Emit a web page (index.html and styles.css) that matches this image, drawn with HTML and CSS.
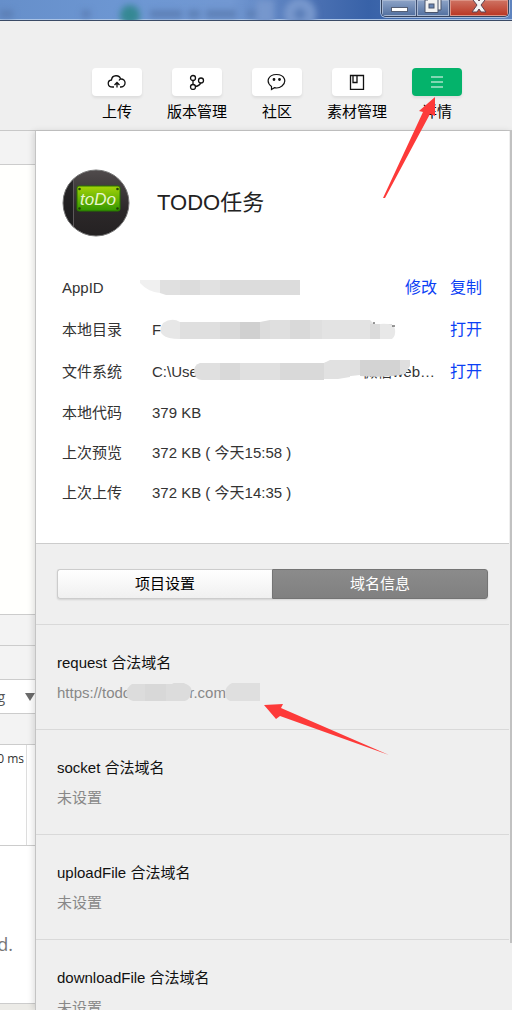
FILE: index.html
```html
<!DOCTYPE HTML>
<html lang="zh-CN">
    <head>
        <title>TODO任务</title>
        <meta charset="UTF-8">
        <link rel="stylesheet" href="styles.css">
    </head>
    <body>
        <header class="titlebar">
            <svg class="glass" width="330" height="20" viewBox="0 0 330 20">
                <g class="blur">
                    <path d="M0 14h13M82 14h8M150 14h32M188 14h12M206 14h30M247 14h10" stroke="#5b7db3" stroke-width="7"/>
                    <circle cx="130" cy="15" r="10" fill="#358893"/>
                    <rect x="256" y="0" width="18" height="24" fill="#7697cd"/>
                    <circle cx="300" cy="14" r="16" fill="#7898cd"/>
                    <path d="M294 14h12M300 8v12" stroke="#5377b3" stroke-width="4"/>
                </g>
            </svg>
            <div class="win_btns">
                <button class="win" aria-label="最小化">
                    <svg width="18" height="16" viewBox="0 0 18 16"><rect x="1.500" y="7.500" width="16" height="4" fill="#fff" stroke="#555f75"/></svg>
                </button>
                <button class="win" aria-label="还原">
                    <svg width="18" height="16" viewBox="0 0 18 16"><path d="M4-2h13v12h-3v2.500H1V0h3z" fill="#f2f2f2" stroke="#4a546c"/><path d="M14 0v10" stroke="#4a546c"/><rect x="5" y="4" width="5" height="4" fill="#6b87b5" stroke="#4a546c"/></svg>
                </button>
                <button class="win close" aria-label="关闭">
                    <svg width="18" height="16" viewBox="0 0 18 16"><path d="M3-2h4l2 3 2-3h4v2l-4 5 5 7h-5l-2-3-2 3H2l5-7-4-5z" fill="#f4f4f4" stroke="#5e4350"/></svg>
                </button>
            </div>
        </header>

        <nav class="toolbar">
            <button class="tool">
                <span class="box">
                    <svg width="20" height="16" viewBox="0 0 20 16" fill="none" stroke="#111" stroke-width="1.300"><path d="M7 13H5.500C0 13 0 6.500 4.500 6 5 .5 12.500.5 13.500 5c6-.5 6 8 .5 8h-1M12 6.500q.5-1 1.500-1.500M10 13.500V9M7.500 11 10 8.500l2.500 2.500"/></svg>
                </span>
                <span class="name">上传</span>
            </button>
            <button class="tool">
                <span class="box">
                    <svg width="16" height="16" viewBox="0 0 16 16" fill="none" stroke="#111" stroke-width="1.300"><circle cx="4" cy="4" r="2.500"/><circle cx="4" cy="13" r="2.500"/><circle cx="12" cy="6.500" r="2.500"/><path d="M4 6.500v4M6.500 12.500C9 12 11 11 11.500 9"/></svg>
                </span>
                <span class="name">版本管理</span>
            </button>
            <button class="tool">
                <span class="box">
                    <svg width="20" height="18" viewBox="0 0 20 18" fill="none" stroke="#111" stroke-width="1.200"><path d="M4.500 16.500V13.500C-1.500 9 1 1.500 9.500 1.500S20 9 15 13c-2.500 2-5.500 2.200-7.500 1.700z"/><circle cx="7" cy="6.500" r=".8" fill="#111"/><circle cx="12.500" cy="6.500" r=".8" fill="#111"/></svg>
                </span>
                <span class="name">社区</span>
            </button>
            <button class="tool">
                <span class="box">
                    <svg width="16" height="16" viewBox="0 0 16 16" fill="none" stroke="#111" stroke-width="1.300"><path d="M1.500 1.500h13v14h-13zM4 1.500v7h4v-7"/></svg>
                </span>
                <span class="name">素材管理</span>
            </button>
            <button class="tool active">
                <span class="box">
                    <svg width="12" height="12" viewBox="0 0 12 12" stroke="#a9e4ca" stroke-width="1.500"><path d="M0 1h12M0 6h12M0 11h12"/></svg>
                </span>
                <span class="name">详情</span>
            </button>
        </nav>

        <main class="work">
            <aside class="devtools">
                <div class="strip top"></div>
                <div class="canvas"></div>
                <div class="strip bar1"></div>
                <div class="strip bar2"></div>
                <div class="filter"><span>g</span><svg width="10" height="8" viewBox="0 0 10 8"><path d="M0 0h10L5 8z" fill="#6b6b6b"/></svg></div>
                <div class="strip bar3"></div>
                <div class="timeline"><span>0 ms</span></div>
                <div class="message"><span>d.</span></div>
                <div class="strip foot"></div>
            </aside>

            <section class="panel">
                <div class="info">
                    <div class="project">
                        <svg width="68" height="68" viewBox="0 0 68 68">
                            <defs>
                                <linearGradient id="cover" x2="0" y2="1"><stop stop-color="#514c4d"/><stop offset=".6" stop-color="#2c2829"/><stop offset="1" stop-color="#242122"/></linearGradient>
                                <linearGradient id="plate" x2="0" y2="1"><stop stop-color="#a4d408"/><stop offset="1" stop-color="#329600"/></linearGradient>
                                <clipPath id="round"><circle cx="34" cy="34" r="33"/></clipPath>
                            </defs>
                            <g clip-path="url(#round)">
                                <rect width="68" height="68" fill="url(#cover)"/>
                                <rect width="11" height="68" fill="#1b1b1c" opacity=".7"/>
                                <path d="M11.500 0v68" stroke="#5c585a"/>
                            </g>
                            <circle cx="34" cy="34" r="33" fill="none" stroke="#777"/>
                            <rect x="15" y="17" width="43" height="25" rx="2" fill="url(#plate)" stroke="#267200"/>
                            <g fill="#24420b"><circle cx="17.500" cy="20" r="1.300"/><circle cx="55.500" cy="20" r="1.300"/><circle cx="17.500" cy="39.500" r="1.300"/><circle cx="55.500" cy="39.500" r="1.300"/></g>
                            <text class="logo_text" x="36" y="36" text-anchor="middle">toDo</text>
                        </svg>
                        <h1>TODO任务</h1>
                    </div>
                    <dl class="fields">
                        <div class="row">
                            <dt>AppID</dt>
                            <dd>
                                <svg class="mosaic" width="290" height="24" viewBox="-12 0 290 24"><path d="M-12 4H8v13Q-4 16-12 7z" fill="#f0f0f0"/><path d="M8 4h20v15H14l-6-2z" fill="#e0e0e0"/><path d="M28 4h20v15H28zM68 4h80v15H68z" fill="#dcdcdc"/><path d="M48 4h20v15H48z" fill="#e1e1e1"/></svg>
                            </dd>
                            <dd class="act"><a href="#">修改</a><a href="#">复制</a></dd>
                        </div>
                        <div class="row">
                            <dt>本地目录</dt>
                            <dd>
                                <span>F</span>
                                <svg class="mosaic" width="290" height="24" viewBox="-12 0 290 24"><path d="M28 4q-8-5-17 1-5 8 0 12 4 4 17 4z" fill="#e7e7e7"/><path d="M28 4h40v17H28zM118 2h52v19h-52z" fill="#dfdfdf"/><path d="M68 4h20v17H68zM138 2h20v19h-20z" fill="#d9d9d9"/><path d="M88 4h20v17H88z" fill="#d0d0d0"/><path d="M108 4l10-2v19h-10z" fill="#dcdcdc"/><path d="M170 21h52V6l-4-4h-48z" fill="#e3e3e3"/><path d="M218 6h22v15h-22z" fill="#dbdbdb"/><path d="M228 6q14-1 15 5 1 7-3 10h-12z" fill="#e8e8e8"/><path d="M221 5h2M240 8h3" stroke="#333"/></svg>
                            </dd>
                            <dd class="act"><a href="#">打开</a></dd>
                        </div>
                        <div class="row">
                            <dt>文件系统</dt>
                            <dd>
                                <span>C:\Use</span><span>微信web…</span>
                                <svg class="mosaic" width="290" height="24" viewBox="-12 0 290 24"><path d="M58 3H48q-6 2-6 8 1 9 8 9h8z" fill="#dfdfdf"/><path d="M58 3h80v17H58zM172 3l10-3h26v15l-36 4z" fill="#e0e0e0"/><path d="M68 3h20v17H68zM128 3h44v17h-44z" fill="#d9d9d9"/><path d="M172 3l6-3h20v17l-12 2h-14z" fill="#e1e1e1"/><path d="M208 0h49q2 3 0 6l-4 8q-18 4-45 2z" fill="#d3d3d3"/><path d="M248 0h10v6l-5 8h-5z" fill="#dfdfdf"/></svg>
                            </dd>
                            <dd class="act"><a href="#">打开</a></dd>
                        </div>
                        <div class="row short"><dt>本地代码</dt><dd>379 KB</dd></div>
                        <div class="row short"><dt>上次预览</dt><dd>372 KB ( 今天15:58 )</dd></div>
                        <div class="row short"><dt>上次上传</dt><dd>372 KB ( 今天14:35 )</dd></div>
                    </dl>
                </div>

                <div class="tabs">
                    <button class="tab">项目设置</button>
                    <button class="tab on">域名信息</button>
                </div>

                <div class="domain">
                    <h2>request 合法域名</h2>
                    <p class="url">
                        <span>https://todo</span><span class="tail">r.com.</span>
                        <svg class="mosaic" width="210" height="24" viewBox="0 0 210 24"><path d="M75 1h40q6-4 14 0 7 3 5 8-1 8-6 9H76q-7-2-7-8 1-6 6-9z" fill="#dcdcdc"/><path d="M88 1h21v17H88z" fill="#d8d8d8"/><path d="M175 0h28v18h-30q-5-2-5-9 1-6 7-9z" fill="#dfdfdf"/></svg>
                    </p>
                </div>
                <div class="domain"><h2>socket 合法域名</h2><p>未设置</p></div>
                <div class="domain"><h2>uploadFile 合法域名</h2><p>未设置</p></div>
                <div class="domain"><h2>downloadFile 合法域名</h2><p>未设置</p></div>
                <div class="thumb"></div>
            </section>
        </main>

        <svg class="arrow to_detail" width="54" height="102" viewBox="0 0 54 102"><path d="M52 0 36 14l4 1L0 101h2L47 17l5 2z" fill="#fd3a39"/></svg>
        <svg class="arrow to_url" width="126" height="52" viewBox="0 0 126 52"><path d="M0 1 19 0l-2 4 108 47L16 12l-4 3z" fill="#fd3a39"/></svg>
    </body>
</html>
```
FILE: styles.css
```css
*{
    box-sizing: border-box;
}
body{
    margin: 0;
    height: 100vh;
    overflow: hidden;
    display: flex;
    flex-direction: column;
    position: relative;
    background: #efefef;
    color: #000;
    font: 15px/20px "Liberation Sans", "Noto Sans CJK SC", sans-serif;
}
h1,h2,p,dl,dt,dd{
    margin: 0;
    font-weight: inherit;
}
button{
    font: inherit;
    color: inherit;
    padding: 0;
    border: 0;
    background: none;
}
svg{
    display: block;
}
a{
    color: #0b3ff5;
    text-decoration: none;
}
/* window frame */
.titlebar{
    height: 21px;
    flex: none;
    display: flex;
    justify-content: space-between;
    background: linear-gradient(90deg, #668fca, #6d97d3 25%, #7298d2 45%, #4a70b2 62%, #3862a8 72%, #5f84bf);
    border-bottom: 1px solid #3a4a66;
    box-shadow: inset 0 -1px #a9c3e6;
}
.glass{
    overflow: hidden;
    min-width: 0;
}
.blur{
    filter: blur(3px);
}
.win_btns{
    display: flex;
    height: 17px;
    margin-right: 3px;
    border: 1px solid #35435e;
    border-top: 0;
    border-radius: 0 0 5px 5px;
    box-shadow: 0 0 0 1px #a5bbdc;
    overflow: hidden;
}
.win{
    width: 35px;
    display: flex;
    justify-content: center;
    background: linear-gradient(#8ea4c8, #516f9f);
    border-right: 1px solid #3d4e70;
    box-shadow: inset 0 0 0 1px #a7b7d2;
}
.win + .win{
    width: 33px;
}
.titlebar .close{
    width: 58px;
    border: 0;
    background: linear-gradient(#cf7363, #b93522);
    box-shadow: inset 0 0 0 1px #dc9385;
}
/* tools */
.toolbar{
    height: 110px;
    flex: none;
    display: flex;
    justify-content: flex-end;
    align-items: flex-start;
    padding: 47px 35px 0 0;
    border-bottom: 1px solid #c8c8c8;
}
.tool{
    width: 80px;
    display: flex;
    flex-direction: column;
    align-items: center;
    gap: 6px;
}
.box{
    width: 50px;
    height: 28px;
    display: flex;
    align-items: center;
    justify-content: center;
    background: #fff;
    border-radius: 4px;
    box-shadow: 0 2px 3px rgba(0,0,0,.08);
}
.active .box{
    background: #04b36b;
}
.work{
    flex: 1;
    min-height: 0;
    display: flex;
}
.devtools{
    width: 35px;
    flex: none;
    display: flex;
    flex-direction: column;
    background: #fff;
}
.strip{
    flex: none;
    height: 31px;
    background: #f3f3f3;
    border-bottom: 1px solid #ccc;
}
.top,.bar2{
    height: 34px;
}
.canvas{
    height: 450px;
    flex: none;
    background: #fffffd;
    border-bottom: 1px solid #ccc;
}
.filter{
    height: 34px;
    flex: none;
    display: flex;
    align-items: center;
    justify-content: space-between;
    border-bottom: 1px solid #ccc;
    color: #555;
    font-family: "Open Sans", sans-serif;
    font-size: 14px;
    overflow: hidden;
}
.filter span{
    width: 5px;
    display: flex;
    justify-content: flex-end;
}
.timeline{
    height: 101px;
    flex: none;
    padding: 4px 0;
    border-bottom: 1px solid #ccc;
    background: linear-gradient(#ddd, #ddd) 26px 0 / 1px 100% no-repeat;
    color: #333;
    font: 12px/20px "Open Sans", sans-serif;
}
.timeline span{
    width: 24px;
    display: flex;
    justify-content: flex-end;
    white-space: nowrap;
}
.message{
    height: 158px;
    flex: none;
    padding-top: 86px;
    border-bottom: 1px solid #ccc;
    color: #777;
    font: 18px/24px "Open Sans", sans-serif;
}
.message span{
    width: 13px;
    display: flex;
    justify-content: flex-end;
}
.foot{
    background: #ecebe7;
}
/* details panel */
.panel{
    flex: 1;
    min-width: 0;
    position: relative;
    padding-right: 3px;
    border-left: 1px solid #c4c4c4;
    background: #efefef;
    box-shadow: -2px 0 6px rgba(0,0,0,.12);
}
.info{
    height: 413px;
    padding: 38px 27px 0 26px;
    background: #fff;
    border-bottom: 1px solid #ccc;
}
.project{
    display: flex;
    align-items: center;
    gap: 27px;
}
.logo_text{
    fill: #e9f6cf;
    font: italic 17px "Liberation Sans", sans-serif;
}
h1{
    font-size: 22px;
    line-height: 32px;
    color: #222;
}
.fields{
    margin-top: 30px;
    color: #333;
}
.row{
    display: flex;
    align-items: center;
    height: 42px;
}
.short{
    height: 40px;
}
.row dt{
    width: 90px;
    flex: none;
}
.row dd{
    flex: 1;
    position: relative;
    display: flex;
    justify-content: space-between;
    min-height: 20px;
    white-space: pre;
}
.row .act{
    flex: none;
    gap: 13px;
    margin-left: 15px;
    font-size: 16px;
}
.mosaic{
    position: absolute;
    left: 0;
    top: 0;
}
.row .mosaic{
    left: -12px;
    top: -2px;
}
.tabs{
    display: flex;
    padding: 25px 21px;
    border-bottom: 1px solid #d9d9d9;
}
.tab{
    flex: 1;
    height: 30px;
    border: 1px solid #ccc;
    border-right: 0;
    border-radius: 3px 0 0 3px;
    background: linear-gradient(#fff, #f0f0f0);
    box-shadow: 0 1px 2px rgba(0,0,0,.12);
}
.on{
    border: 1px solid #747474;
    border-radius: 0 3px 3px 0;
    background: linear-gradient(#8b8b8b, #808080);
    color: #fff;
}
.domain{
    height: 105px;
    padding: 28px 21px 0;
    border-bottom: 1px solid #d9d9d9;
}
h2{
    font-size: 15px;
    line-height: 20px;
    color: #111;
}
.domain p{
    position: relative;
    margin-top: 10px;
    color: #888;
}
.url{
    display: flex;
}
.url .tail{
    margin-left: 58px;
}
.thumb{
    position: absolute;
    top: 0;
    right: 0;
    width: 2px;
    height: 812px;
    background: #c1c1c1;
}
/* pointers drawn over the window */
.arrow{
    position: absolute;
}
.to_detail{
    left: 383px;
    top: 97px;
}
.to_url{
    left: 264px;
    top: 704px;
}
```
